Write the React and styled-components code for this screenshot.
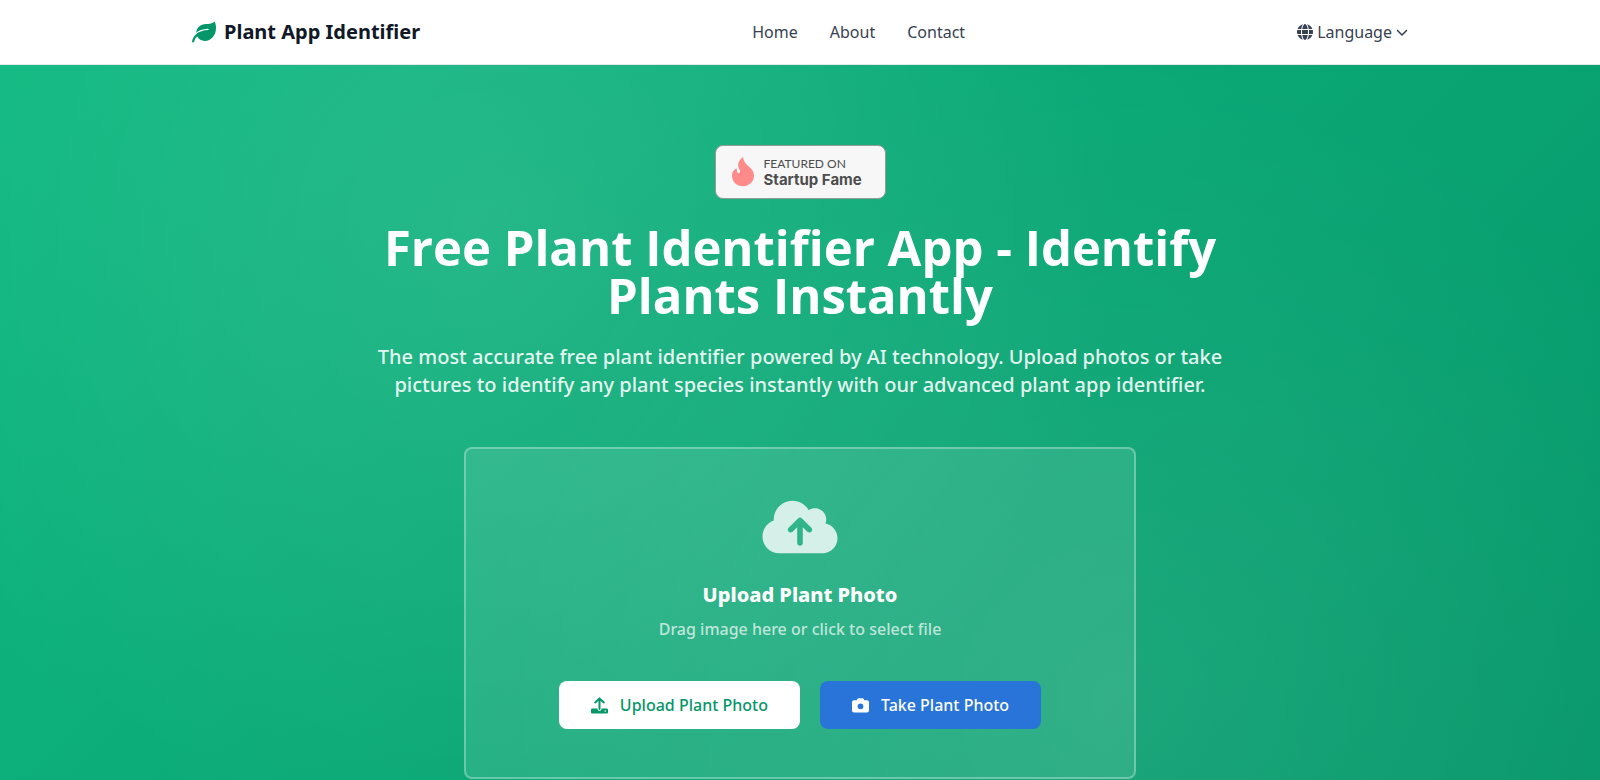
import styled, { createGlobalStyle } from 'styled-components';
import { FaGlobe, FaCloudArrowUp, FaChevronDown } from 'react-icons/fa6';

const GlobalStyle = createGlobalStyle`
  * {
    box-sizing: border-box;
  }
  body {
    margin: 0;
    font-family: "Noto Sans", "Open Sans", sans-serif;
    font-size: 16px;
    line-height: 24px;
    color: #374151;
  }
`;

const Header = styled.header`
  background: white;
  border-bottom: 1px solid #e5e7eb;
`;

const HeaderInner = styled.div`
  max-width: 1280px;
  height: 64px;
  margin: 0 auto;
  padding: 0 32px;
  display: flex;
  align-items: center;
  justify-content: space-between;
`;

const Logo = styled.a`
  display: flex;
  align-items: center;
  gap: 8px;
  font-size: 20px;
  line-height: 28px;
  font-weight: 700;
  color: #111827;
  text-decoration: none;
  & svg {
    color: #059669;
  }
`;

const Nav = styled.nav`
  display: flex;
  gap: 32px;
  & a {
    color: #374151;
    text-decoration: none;
  }
`;

const LanguageButton = styled.button`
  display: flex;
  align-items: center;
  gap: 4px;
  padding: 0;
  border: 0;
  background: none;
  font: inherit;
  color: #374151;
  cursor: pointer;
  & svg {
    font-size: 16px;
  }
  & svg:last-child {
    font-size: 12px;
  }
`;

const Hero = styled.section`
  padding: 80px 32px;
  background:
    radial-gradient(circle at 30% 20%, rgba(255, 255, 255, 0.1) 0%, transparent 50%),
    radial-gradient(circle at 70% 80%, rgba(255, 255, 255, 0.08) 0%, transparent 50%),
    linear-gradient(135deg, #10b981 0%, #059669 100%);
  color: white;
  text-align: center;
`;

const HeroInner = styled.div`
  max-width: 896px;
  margin: 0 auto;
  display: flex;
  flex-direction: column;
  align-items: center;
`;

const Badge = styled.a`
  display: flex;
  align-items: center;
  gap: 10px;
  width: 171px;
  height: 54px;
  padding: 0 16px;
  border: 1px solid #999;
  border-radius: 8px;
  background: #f7f7f7;
  color: #4d4d4d;
  text-align: left;
  text-decoration: none;
  font-family: Lato, sans-serif;
`;

const BadgeText = styled.span`
  display: flex;
  flex-direction: column;
  font-size: 12px;
  line-height: 16px;
  white-space: nowrap;
  & strong {
    font-family: Inter, sans-serif;
    font-size: 15px;
    font-weight: 700;
  }
`;

const Title = styled.h1`
  margin: 24px 0;
  font-family: "Open Sans", sans-serif;
  font-size: 49px;
  line-height: 48px;
  font-weight: 700;
`;

const Subtitle = styled.p`
  margin: 0 0 48px;
  font-size: 20px;
  line-height: 28px;
  font-weight: 500;
  color: rgba(255, 255, 255, 0.9);
`;

const UploadCard = styled.div`
  width: 100%;
  max-width: 672px;
  padding: 48px;
  display: flex;
  flex-direction: column;
  align-items: center;
  border: 2px solid rgba(255, 255, 255, 0.3);
  border-radius: 8px;
  background: rgba(255, 255, 255, 0.1);
  & > svg {
    width: 76px;
    height: 60px;
    margin-bottom: 24px;
    color: rgba(255, 255, 255, 0.8);
  }
`;

const CardTitle = styled.h2`
  margin: 0 0 8px;
  font-size: 20px;
  line-height: 28px;
  font-weight: 800;
`;

const CardHint = styled.p`
  margin: 0 0 40px;
  font-weight: 500;
  color: rgba(255, 255, 255, 0.7);
`;

const Actions = styled.div`
  display: flex;
  flex-wrap: wrap;
  justify-content: center;
  gap: 20px;
`;

const ActionButton = styled.button`
  display: flex;
  align-items: center;
  gap: 12px;
  height: 48px;
  padding: 0 32px;
  border: 0;
  border-radius: 8px;
  font: inherit;
  font-weight: 500;
  background: ${(props) => (props.$primary ? '#2874d9' : 'white')};
  color: ${(props) => (props.$primary ? 'white' : '#059669')};
  cursor: pointer;
`;

const LeafIcon = () => (
  <svg width="24" height="22" viewBox="0 0 24 22" fill="none" aria-hidden="true">
    <path
      fill="currentColor"
      d="M22.6.4C23.6 2.2 24 4.6 24 7C24 14.4 19 20 12.8 20C9.4 20 6.6 18.4 5.2 15.6L4.2 12.4C4 7 8.6 3 14 3C17.6 3 20.6 2.4 22.6.4Z"
    />
    <path stroke="white" strokeWidth="1.3" strokeLinecap="round" d="M4.2 12.6C7.2 9.8 10.8 8.6 16 8.4" />
    <path stroke="currentColor" strokeWidth="2.2" strokeLinecap="round" d="M1.2 20.4C1.6 17.6 3.4 15 6.4 13" />
  </svg>
);

const FlameIcon = () => (
  <svg width="22" height="30" viewBox="0 0 22 30" fill="#ff8a8a" aria-hidden="true">
    <path d="M11 0C6.8 3 5.4 7 6.6 10.6C7.6 13.2 8.6 14 7.8 15.4C6.9 16.6 5.2 15.9 5 14.2C4.9 13.3 5 12.4 4.6 11.6C1.8 12.5 0 15.4 0 18.4C0 24.6 4.8 29.2 11 29.2C17.4 29.2 22 24.6 22 18.6C22 14.6 20 12 16.8 9.4C13.6 6.8 11.4 4.2 11 0Z" />
  </svg>
);

const UploadIcon = () => (
  <svg width="17" height="17" viewBox="0 0 17 17" fill="none" aria-hidden="true">
    <path
      fill="currentColor"
      d="M1.4 11.4H6.4C6.4 13 7.2 13.8 8.5 13.8S10.6 13 10.6 11.4H15.6C16.4 11.4 17 12 17 12.8V15.2C17 16 16.4 16.6 15.6 16.6H1.4C.6 16.6 0 16 0 15.2V12.8C0 12 .6 11.4 1.4 11.4ZM14.2 13.2A.8.8 0 1 0 14.2 14.8A.8.8 0 1 0 14.2 13.2Z"
      fillRule="evenodd"
    />
    <path stroke="currentColor" strokeWidth="2" strokeLinecap="round" strokeLinejoin="round" d="M8.5 12V1.6M4.2 5.4L8.5 1.4L12.8 5.4" />
  </svg>
);

const CameraIcon = () => (
  <svg width="17" height="17" viewBox="0 0 17 17" fill="currentColor" aria-hidden="true">
    <path
      fillRule="evenodd"
      d="M4.7 3.2L5.2 2.2C5.5 1.6 6 1.3 6.6 1.3H10.4C11 1.3 11.5 1.6 11.8 2.2L12.3 3.2H15C16.1 3.2 17 4.1 17 5.2V13.4C17 14.5 16.1 15.4 15 15.4H2C.9 15.4 0 14.5 0 13.4V5.2C0 4.1.9 3.2 2 3.2ZM8.5 6.4A2.9 2.9 0 1 0 8.5 12.2A2.9 2.9 0 1 0 8.5 6.4Z"
    />
  </svg>
);

const links = [
  { key: 1, name: 'Home' },
  { key: 2, name: 'About' },
  { key: 3, name: 'Contact' },
];

const App = () => {
  return (
    <>
      <GlobalStyle />
      <Header>
        <HeaderInner>
          <Logo href="#">
            <LeafIcon />
            Plant App Identifier
          </Logo>
          <Nav>
            {links.map((link) => (
              <a key={link.key} href="#">{link.name}</a>
            ))}
          </Nav>
          <LanguageButton type="button">
            <FaGlobe />
            Language
            <FaChevronDown />
          </LanguageButton>
        </HeaderInner>
      </Header>

      <Hero>
        <HeroInner>
          <Badge href="#">
            <FlameIcon />
            <BadgeText>
              FEATURED ON
              <strong>Startup Fame</strong>
            </BadgeText>
          </Badge>
          <Title>Free Plant Identifier App - Identify Plants Instantly</Title>
          <Subtitle>
            The most accurate free plant identifier powered by AI technology. Upload photos or take
            pictures to identify any plant species instantly with our advanced plant app identifier.
          </Subtitle>
          <UploadCard>
            <FaCloudArrowUp />
            <CardTitle>Upload Plant Photo</CardTitle>
            <CardHint>Drag image here or click to select file</CardHint>
            <Actions>
              <ActionButton type="button">
                <UploadIcon />
                Upload Plant Photo
              </ActionButton>
              <ActionButton type="button" $primary>
                <CameraIcon />
                Take Plant Photo
              </ActionButton>
            </Actions>
          </UploadCard>
        </HeroInner>
      </Hero>
    </>
  );
};

export default App;
